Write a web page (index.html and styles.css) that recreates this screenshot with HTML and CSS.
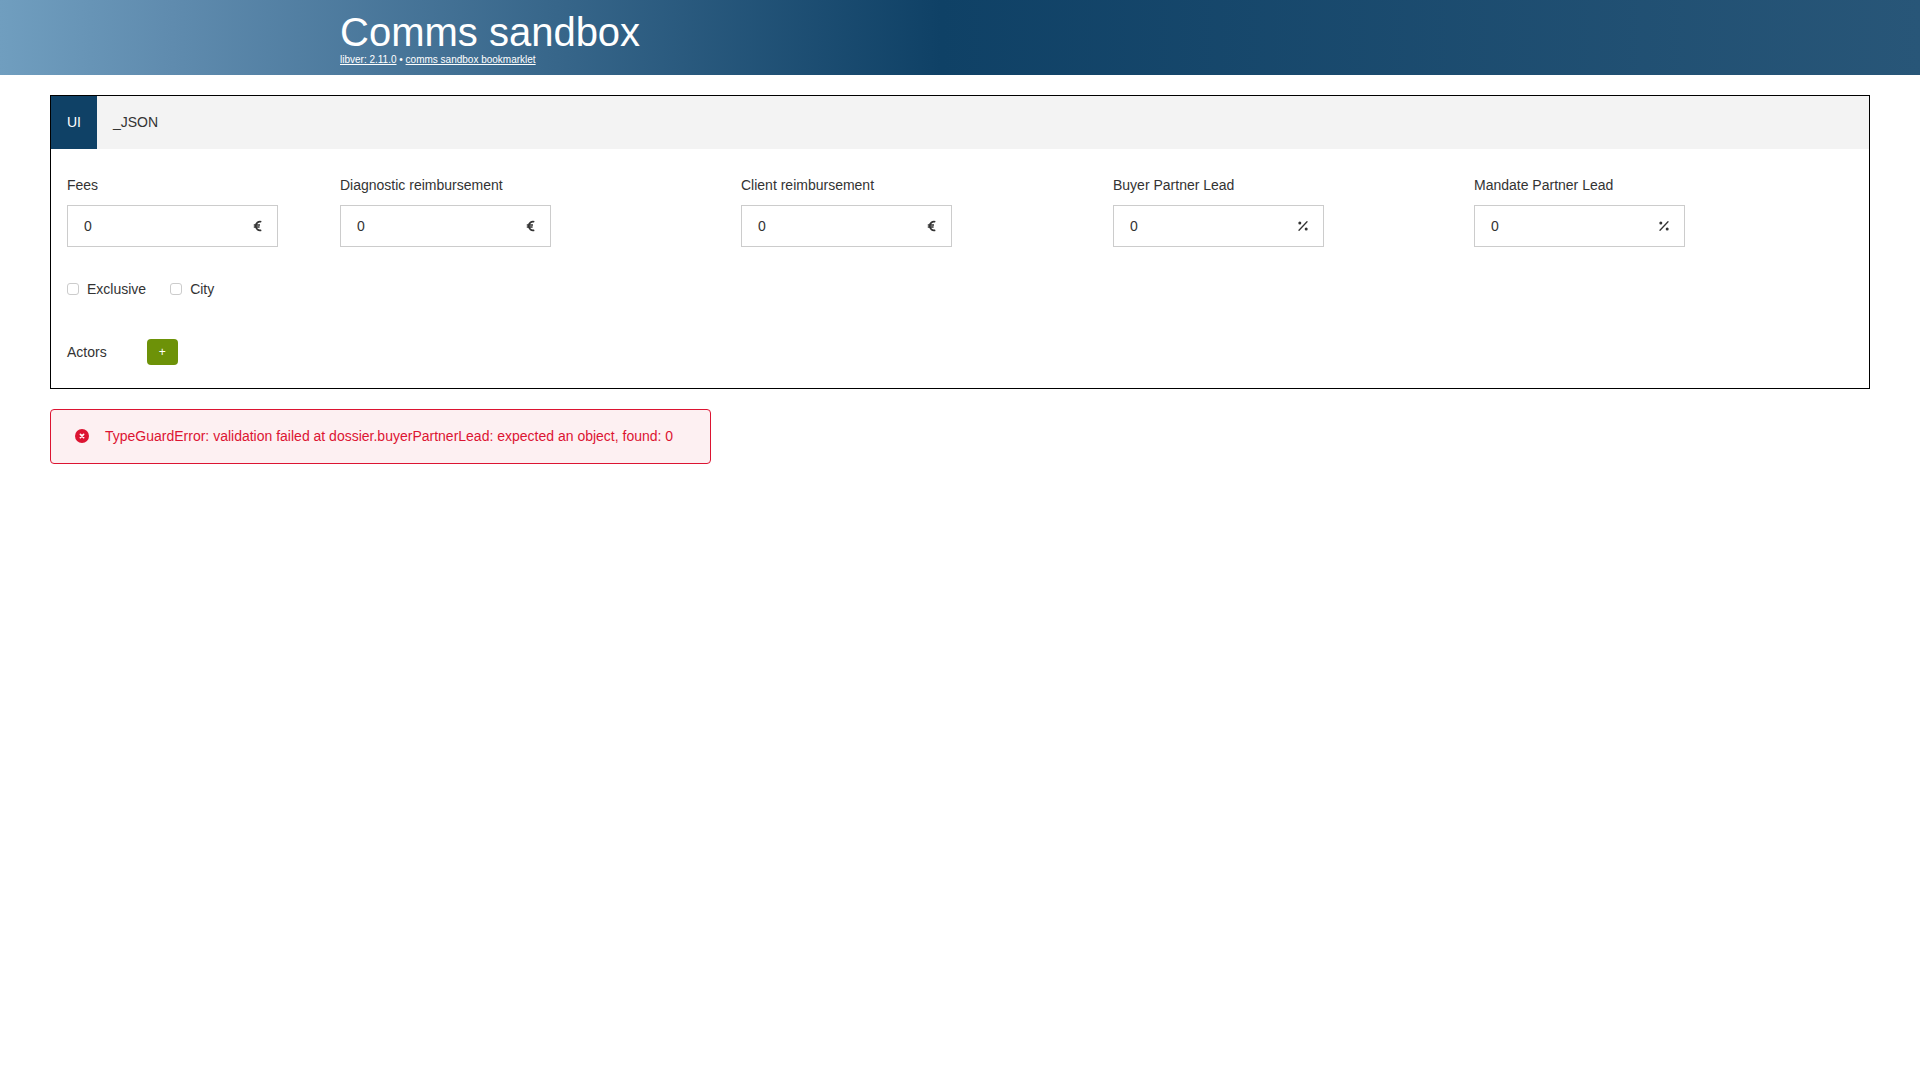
FILE: index.html
```html
<!DOCTYPE html>
<html lang="en">
<head>
<meta charset="utf-8">
<meta name="viewport" content="width=device-width, initial-scale=1">
<title>Comms sandbox</title>
<link rel="stylesheet" href="styles.css">
</head>
<body>
<svg class="symbols" aria-hidden="true">
  <symbol id="euro" viewBox="0 0 12 12"><path d="M10.300 1.800A4.200 4.200 0 0 0 4.800 6a4.200 4.200 0 0 0 5.500 4.200M2.800 5H9M2.800 7h5.800" fill="none" stroke="currentColor" stroke-width="1.700"/></symbol>
  <symbol id="percent" viewBox="0 0 12 12"><path d="M10 1.800 2 10.200" fill="none" stroke="currentColor" stroke-width="1.300" stroke-linecap="round"/><circle cx="2.800" cy="3" r="1.500" fill="currentColor"/><circle cx="9.200" cy="9" r="1.500" fill="currentColor"/></symbol>
</svg>
<header class="banner">
  <h1 class="title">Comms sandbox</h1>
  <p class="links"><a href="#version">libver: 2.11.0</a> • <a href="#bookmarklet">comms sandbox bookmarklet</a></p>
</header>
<main class="content">
  <section class="panel">
    <nav class="tabs" role="tablist">
      <button class="tab tab-active" type="button" role="tab" aria-selected="true">UI</button>
      <button class="tab" type="button" role="tab" aria-selected="false">_JSON</button>
    </nav>
    <form class="form">
      <div class="fields">
        <div class="field">
          <label for="fees">Fees</label>
          <div class="amount"><input id="fees" type="text" value="0"><svg class="unit"><use href="#euro"/></svg></div>
        </div>
        <div class="field">
          <label for="diagnostic">Diagnostic reimbursement</label>
          <div class="amount"><input id="diagnostic" type="text" value="0"><svg class="unit"><use href="#euro"/></svg></div>
        </div>
        <div class="field">
          <label for="client">Client reimbursement</label>
          <div class="amount"><input id="client" type="text" value="0"><svg class="unit"><use href="#euro"/></svg></div>
        </div>
        <div class="field">
          <label for="buyer">Buyer Partner Lead</label>
          <div class="amount"><input id="buyer" type="text" value="0"><svg class="unit"><use href="#percent"/></svg></div>
        </div>
        <div class="field">
          <label for="mandate">Mandate Partner Lead</label>
          <div class="amount"><input id="mandate" type="text" value="0"><svg class="unit"><use href="#percent"/></svg></div>
        </div>
      </div>
      <div class="options">
        <label class="option"><input class="checkbox" type="checkbox">Exclusive</label>
        <label class="option"><input class="checkbox" type="checkbox">City</label>
      </div>
      <div class="actors">
        <span>Actors</span>
        <button class="add" type="button" aria-label="Add actor">+</button>
      </div>
    </form>
  </section>
  <div class="alert" role="alert">
    <svg class="alert-icon" viewBox="0 0 14 14" aria-hidden="true"><circle cx="7" cy="7" r="7" fill="currentColor"/><path d="m5.400 5.400 3.200 3.200m0-3.200L5.400 8.600" stroke="#fff" stroke-width="1.700" stroke-linecap="round"/></svg>
    <span>TypeGuardError: validation failed at dossier.buyerPartnerLead: expected an object, found: 0</span>
  </div>
</main>
</body>
</html>
```
FILE: styles.css
```css
* {
  box-sizing: border-box;
}

body {
  margin: 0;
  background: #fff;
  color: #333;
  font: 14px/20px "Liberation Sans", Arial, sans-serif;
}

button,
input {
  margin: 0;
  color: inherit;
  font: inherit;
}

.symbols {
  display: none;
}

.banner {
  padding: 10px 340px 9px;
  background: linear-gradient(90deg, #709ebf 0%, #5f8bae 9%, #0f4166 49%, #285678 100%);
  color: #fff;
}

.title {
  margin: 0;
  font-size: 40px;
  font-weight: 400;
  line-height: 44px;
}

.links {
  margin: 0;
  font-size: 10px;
  line-height: 12px;
}

.links a {
  color: inherit;
}

.content {
  display: flex;
  flex-direction: column;
  align-items: flex-start;
  gap: 20px;
  padding: 20px 50px;
}

.panel {
  width: 100%;
  border: 1px solid #000;
}

.tabs {
  display: flex;
  background: #f3f3f3;
}

.tab {
  padding: 16px;
  border: 0;
  background: transparent;
  line-height: 21px;
}

.tab-active {
  background: #0f4166;
  color: #fff;
}

.form {
  padding: 26px 16px 23px;
}

.fields {
  display: grid;
  grid-template-columns: 273fr 401fr 372fr 361fr 379fr;
}

.field {
  display: flex;
  flex-direction: column;
  gap: 10px;
}

.amount {
  display: flex;
  align-items: center;
  width: 211px;
  height: 42px;
  padding: 0 14px 0 16px;
  border: 1px solid #ccc;
}

.amount input {
  flex: 1;
  min-width: 0;
  padding: 0;
  border: 0;
  outline: 0;
  background: transparent;
}

.unit {
  width: 12px;
  height: 12px;
}

.options {
  display: flex;
  gap: 24px;
  margin-top: 32px;
}

.option {
  display: flex;
  align-items: center;
  gap: 8px;
}

.checkbox {
  width: 12px;
  height: 12px;
  appearance: none;
  border: 1px solid #ccc;
  border-radius: 3px;
  background: #fff;
}

.actors {
  display: flex;
  align-items: center;
  gap: 40px;
  margin-top: 40px;
}

.add {
  padding: 5px 12px;
  border: 0;
  border-radius: 4px;
  background: #6d9208;
  color: #fff;
  font-size: 12px;
  line-height: 16px;
}

.alert {
  display: flex;
  align-items: center;
  gap: 16px;
  min-width: 661px;
  padding: 16px 24px 17px;
  border: 1px solid #dc1432;
  border-radius: 4px;
  background: #fdf0f2;
  color: #dc1432;
}

.alert-icon {
  width: 14px;
  height: 14px;
}
```
